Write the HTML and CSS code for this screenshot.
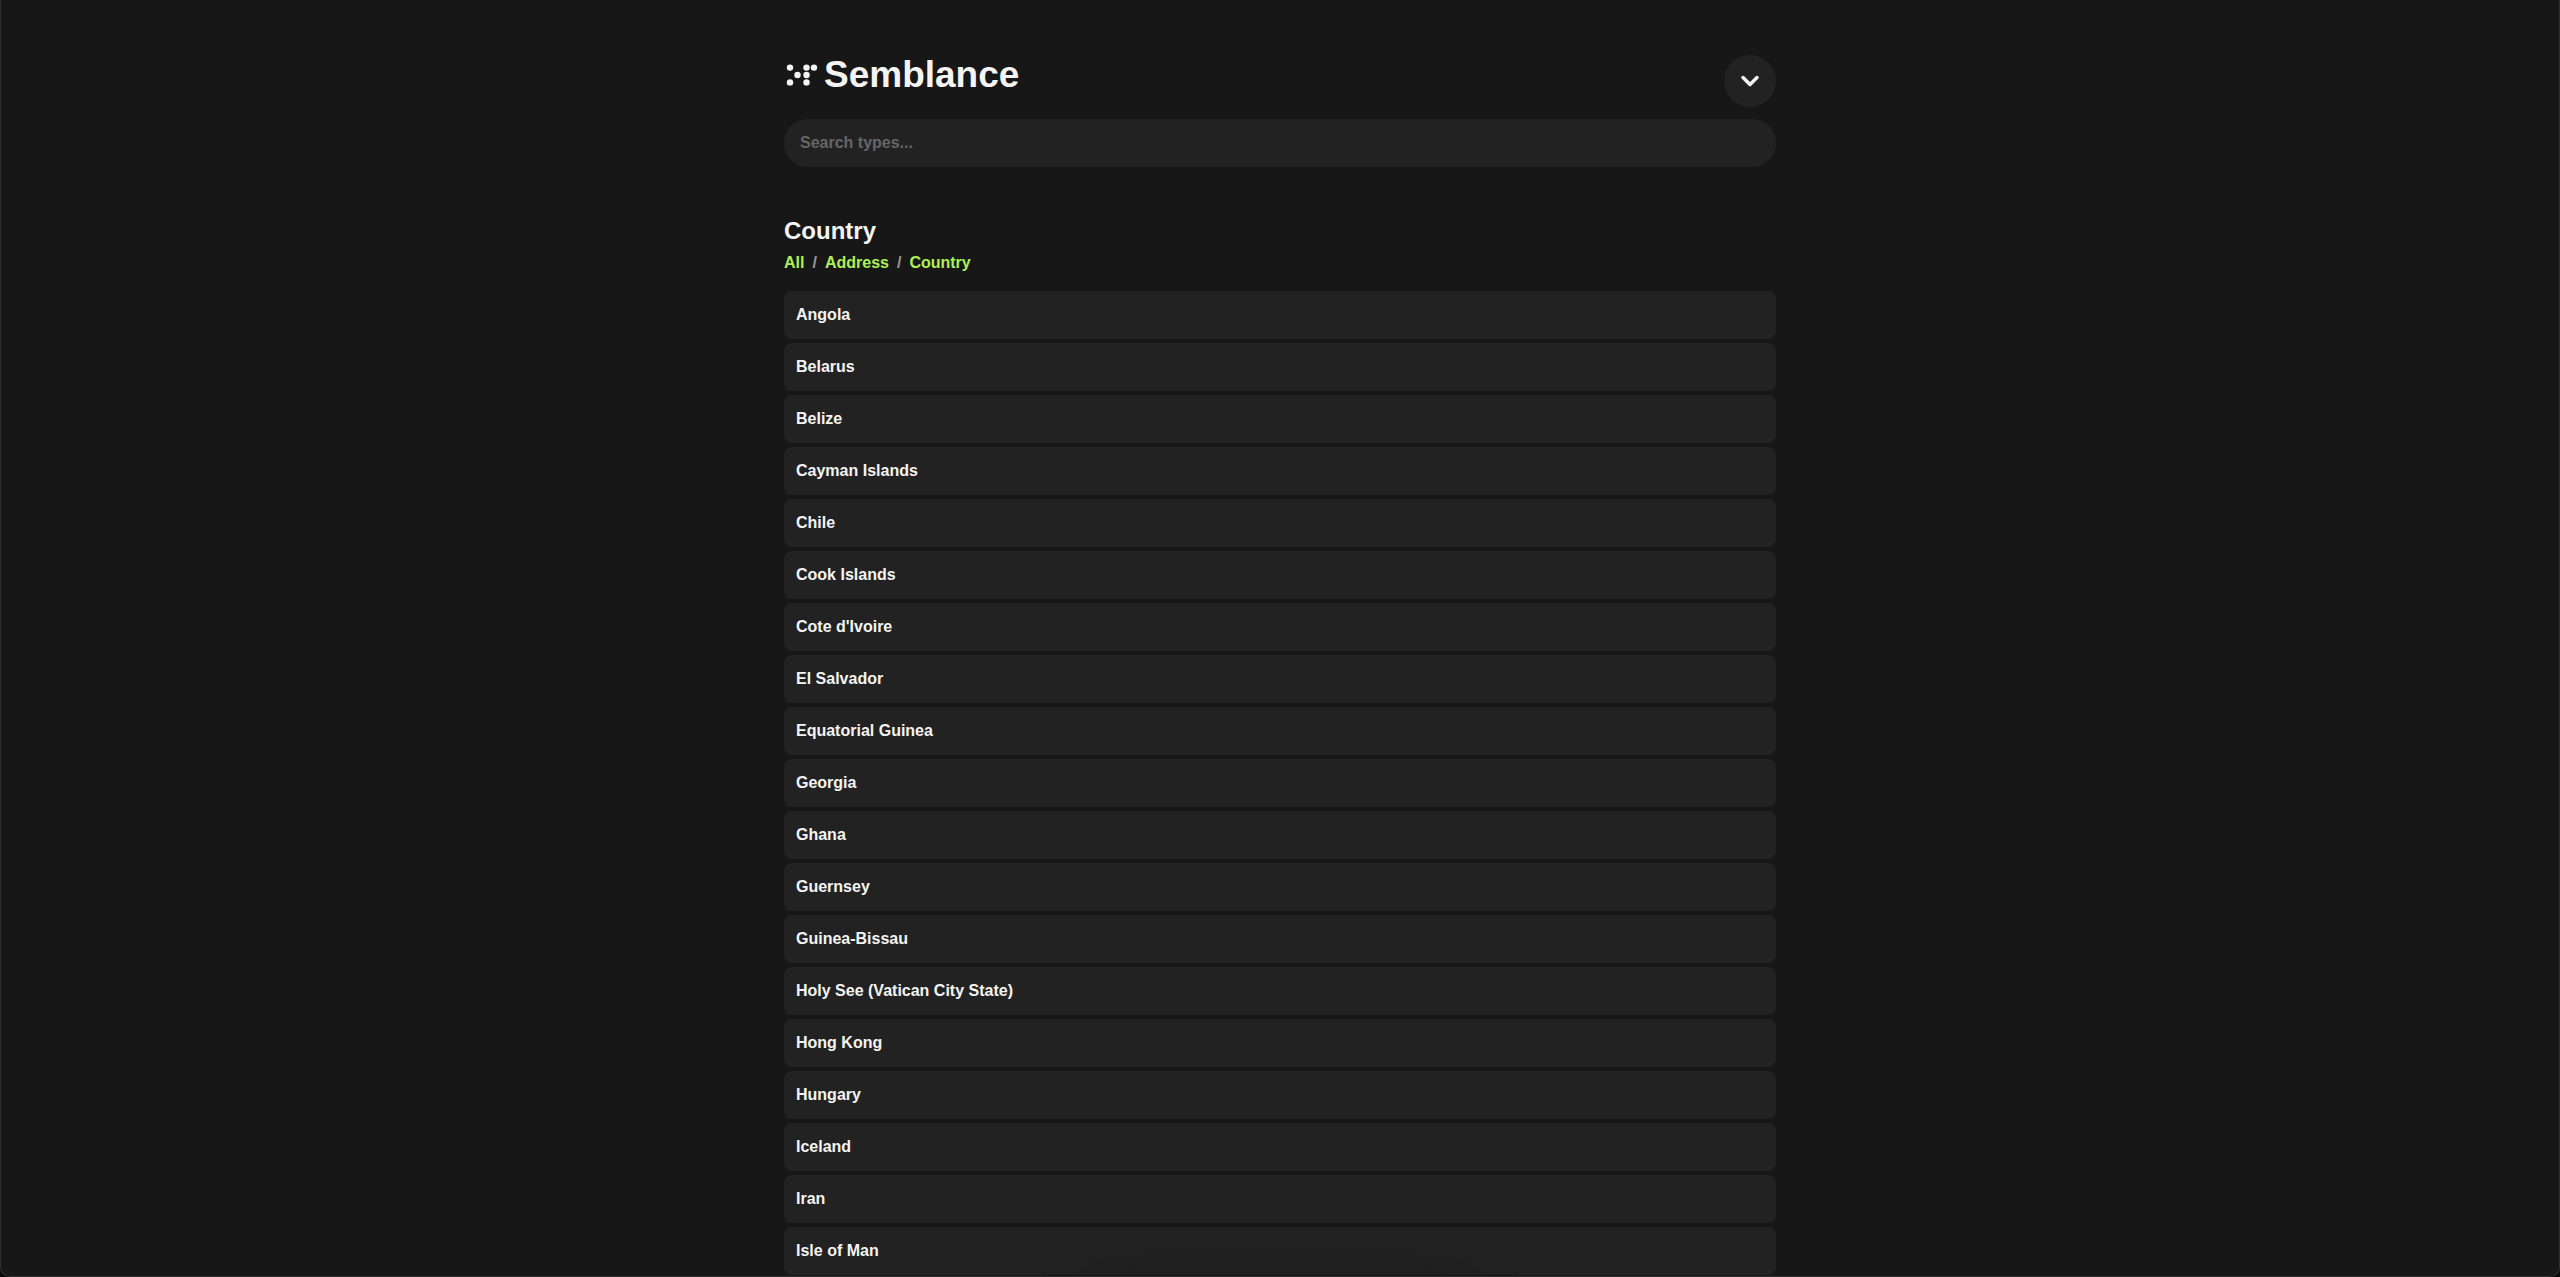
FILE: index.html
```html
<!DOCTYPE html>
<html lang="en">

<head>
    <meta charset="UTF-8">
    <meta name="viewport" content="width=device-width, initial-scale=1.0">
    <title>Semblance</title>
    <link rel="stylesheet" href="styles.css">
</head>

<body>
    <div class="window">
        <div class="container">
            <header class="header">
                <a class="brand" href="#">
                    <svg class="logo" viewBox="0 0 34 24" aria-hidden="true">
                        <circle cx="6" cy="4.6" r="3.2" />
                        <circle cx="6" cy="19.4" r="3.2" />
                        <circle cx="13.5" cy="12" r="3.2" />
                        <circle cx="22.5" cy="4.6" r="3.2" />
                        <circle cx="30" cy="4.6" r="3.2" />
                        <circle cx="22.5" cy="12" r="3.2" />
                        <circle cx="22.5" cy="19.4" r="3.2" />
                    </svg>
                    <h1>Semblance</h1>
                </a>
                <button class="menu-button" type="button" aria-label="Menu">
                    <svg viewBox="0 0 20 12" aria-hidden="true">
                        <path d="M3 2.5 L10 9.5 L17 2.5" />
                    </svg>
                </button>
            </header>
            <input class="search" type="search" placeholder="Search types..." aria-label="Search types">
            <main>
                <h2>Country</h2>
                <nav class="breadcrumbs">
                    <a href="#">All</a>
                    <span>/</span>
                    <a href="#">Address</a>
                    <span>/</span>
                    <a href="#">Country</a>
                </nav>
                <ul class="list">
                    <li>Angola</li>
                    <li>Belarus</li>
                    <li>Belize</li>
                    <li>Cayman Islands</li>
                    <li>Chile</li>
                    <li>Cook Islands</li>
                    <li>Cote d'Ivoire</li>
                    <li>El Salvador</li>
                    <li>Equatorial Guinea</li>
                    <li>Georgia</li>
                    <li>Ghana</li>
                    <li>Guernsey</li>
                    <li>Guinea-Bissau</li>
                    <li>Holy See (Vatican City State)</li>
                    <li>Hong Kong</li>
                    <li>Hungary</li>
                    <li>Iceland</li>
                    <li>Iran</li>
                    <li>Isle of Man</li>
                </ul>
            </main>
        </div>
        <div class="toast"></div>
    </div>
</body>

</html>
```
FILE: styles.css
```css
*,
*:before,
*:after {
    box-sizing: border-box;
}

body {
    margin: 0;
    background-color: #080808;
    color: #f4f4f4;
    font-family: "Liberation Sans", Arial, sans-serif;
    font-size: 16px;
    font-weight: bold;
    line-height: 24px;
}

.window {
    position: relative;
    height: 100vh;
    overflow: hidden;
    background-color: #171717;
    border: 1px solid #303030;
    border-top: none;
    border-radius: 0 0 10px 10px;
}

.container {
    max-width: 1024px;
    margin: 0 auto;
    padding: 55px 16px 0;
}

.header {
    display: flex;
    align-items: flex-start;
    justify-content: space-between;
    margin-bottom: 12px;
}

.brand {
    display: flex;
    align-items: center;
    gap: 6px;
    color: inherit;
    text-decoration: none;
}

.logo {
    width: 34px;
    height: 24px;
    fill: #f4f4f4;
}

h1 {
    margin: 0;
    font-size: 37px;
    line-height: 40px;
}

.menu-button {
    display: flex;
    align-items: center;
    justify-content: center;
    width: 52px;
    height: 52px;
    padding: 0;
    border: none;
    border-radius: 50%;
    background-color: #222;
    cursor: pointer;
}

.menu-button svg {
    width: 20px;
    height: 12px;
    fill: none;
    stroke: #f4f4f4;
    stroke-width: 3.5;
    stroke-linecap: round;
    stroke-linejoin: round;
}

.search {
    display: block;
    width: 100%;
    height: 48px;
    margin: 0 0 48px;
    padding: 0 16px;
    border: none;
    border-radius: 24px;
    background-color: #222;
    color: #f4f4f4;
    font: inherit;
}

.search::placeholder {
    color: #666;
    opacity: 1;
}

h2 {
    margin: 0;
    font-size: 24px;
    line-height: 32px;
}

.breadcrumbs {
    display: flex;
    gap: 8px;
    margin: 4px 0 16px;
}

.breadcrumbs a {
    color: #aef054;
    text-decoration: none;
}

.breadcrumbs span {
    color: #999;
}

.list {
    display: flex;
    flex-direction: column;
    gap: 4px;
    margin: 0;
    padding: 0;
    list-style: none;
}

.list li {
    padding: 12px;
    border-radius: 8px;
    background-color: #222;
}

/* parked below the window, only its shadow shows */
.toast {
    position: absolute;
    top: 100%;
    left: 50%;
    width: 400px;
    height: 48px;
    margin-left: -200px;
    border-radius: 24px;
    box-shadow: 0 8px 48px rgba(0, 0, 0, 0.3);
}
```
